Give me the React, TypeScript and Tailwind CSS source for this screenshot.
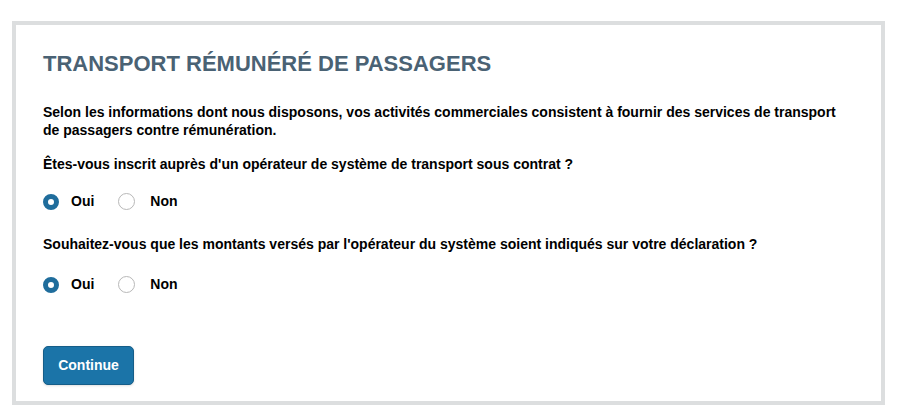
import React, { useState } from "react";

const Radio = ({ checked, label, onClick }: { checked: boolean; label: string; onClick: () => void }) => (
  <label className="flex items-center cursor-pointer" onClick={onClick}>
    {checked ? (
      <span className="w-[16px] h-[16px] rounded-full border-[5px] border-[#1f6d9c] bg-white"></span>
    ) : (
      <span className="w-[17px] h-[17px] rounded-full border border-[#b8b8b8] bg-white"></span>
    )}
    <span className={`text-[14px] font-bold text-black ${checked ? "ml-[12px]" : "ml-[15px]"}`}>{label}</span>
  </label>
);

const Question = ({ text, value, onChange, gap }: { text: string; value: string; onChange: (v: string) => void; gap: string }) => (
  <div>
    <p className="text-[14px] font-bold text-black leading-[18px]">{text}</p>
    <div className={`flex items-center gap-[24px] ${gap}`}>
      <Radio checked={value === "oui"} label="Oui" onClick={() => onChange("oui")} />
      <Radio checked={value === "non"} label="Non" onClick={() => onChange("non")} />
    </div>
  </div>
);

export default function App() {
  const [q1, setQ1] = useState("oui");
  const [q2, setQ2] = useState("oui");

  return (
    <div className="w-[903px] h-[420px] bg-white pt-[21px] pl-[12px]" style={{ fontFamily: '"Liberation Sans", Arial, sans-serif' }}>
      <div className="w-[873px] h-[384px] border-[4px] border-[#dcdedf] bg-white pl-[27px] pt-[24px]">
        <h1 className="text-[22px] font-bold text-[#4a6274] leading-[30px]">TRANSPORT RÉMUNÉRÉ DE PASSAGERS</h1>

        <p className="text-[14px] font-bold text-black leading-[18px] mt-[24px] w-[808px]">
          Selon les informations dont nous disposons, vos activités commerciales consistent à fournir des services de transport de passagers contre rémunération.
        </p>

        <div className="mt-[16px]">
          <Question
            text="Êtes-vous inscrit auprès d'un opérateur de système de transport sous contrat ?"
            value={q1}
            onChange={setQ1}
            gap="mt-[18px]"
          />
        </div>

        <div className="mt-[23px]">
          <Question
            text="Souhaitez-vous que les montants versés par l'opérateur du système soient indiqués sur votre déclaration ?"
            value={q2}
            onChange={setQ2}
            gap="mt-[21px]"
          />
        </div>

        <button className="mt-[51px] w-[91px] h-[39px] rounded-[5px] bg-[#1b74a8] border border-[#155d88] text-white text-[14px] font-bold shadow-sm">
          Continue
        </button>
      </div>
    </div>
  );
}
